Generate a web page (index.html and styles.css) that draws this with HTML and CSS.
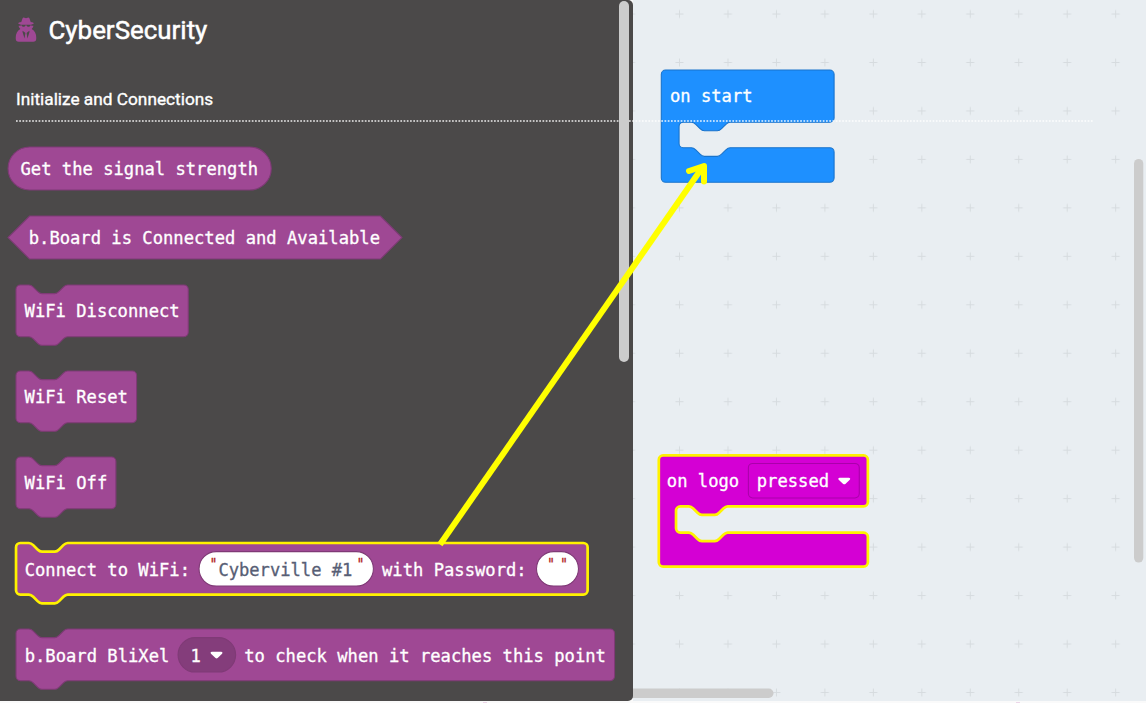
FILE: index.html
```html
<!DOCTYPE html>
<html lang="en">
<head>
<meta charset="utf-8">
<title>CyberSecurity blocks</title>
<link rel="stylesheet" href="styles.css">
</head>
<body>
<div class="editor">
  <aside class="flyout">
    <header class="flyout-head">
      <svg class="agent" viewBox="0 0 22 26" width="22" height="25.4">
        <path d="M6.200 5.200 7.400 1.600Q8 .2 9.400.8 11 1.600 12.600.8 14 .2 14.600 1.600L15.800 5.200Q19 5.800 19 6.500 18.800 7.400 16.700 7.800V8.500L18.700 9Q18.200 11 16.800 12.200 21.500 15 21.500 21V22Q21.500 25.300 18.300 25.300H3.700Q.5 25.300.5 22V21Q.5 15 5.200 12.200 3.800 11 3.300 9L5.300 8.500V7.800Q3.200 7.400 3 6.500 3 5.800 6.200 5.200Z"/>
        <path class="agent-cut" d="M2.500 7.900H19.500V8.600H15.200L14.500 10H12.500L11.800 8.600H10.200L9.500 10H7.500L6.800 8.600H2.500ZM7.500 14 9.600 15.600 10.400 16.500 9.500 22 7.500 15.500ZM14.500 14 12.400 15.600 11.600 16.500 12.500 22 14.500 15.500Z"/>
      </svg>
      <h1>CyberSecurity</h1>
    </header>
    <h2>Initialize and Connections</h2>
    <div class="blocks">
      <svg class="block value" viewBox="0 0 244.6 40" width="263.3" height="43.06">
        <rect width="244.600" height="40" rx="20"/>
        <text x="11.600" y="25.900" textLength="220.800" lengthAdjust="spacingAndGlyphs">Get the signal strength</text>
      </svg>
      <svg class="block value" viewBox="0 0 366 40" width="394" height="43.06">
        <path d="M20 0H346L366 20 346 40H20L0 20Z"/>
        <text x="19.200" y="25.900" textLength="326.400" lengthAdjust="spacingAndGlyphs">b.Board is Connected and Available</text>
      </svg>
      <svg class="block" viewBox="0 0 160 56" width="172.26" height="60.29">
        <path d="M0 4A4 4 0 0 1 4 0H12c2 0 3 1 4 2l4 4c1 1 2 2 4 2h12c2 0 3-1 4-2l4-4c1-1 2-2 4-2H156a4 4 0 0 1 4 4V44a4 4 0 0 1-4 4H48c-2 0-3 1-4 2l-4 4c-1 1-2 2-4 2H24c-2 0-3-1-4-2l-4-4c-1-1-2-2-4-2H4a4 4 0 0 1-4-4Z"/>
        <text x="8" y="29.500" textLength="144" lengthAdjust="spacingAndGlyphs">WiFi Disconnect</text>
      </svg>
      <svg class="block" viewBox="0 0 112 56" width="120.58" height="60.29">
        <path d="M0 4A4 4 0 0 1 4 0H12c2 0 3 1 4 2l4 4c1 1 2 2 4 2h12c2 0 3-1 4-2l4-4c1-1 2-2 4-2H108a4 4 0 0 1 4 4V44a4 4 0 0 1-4 4H48c-2 0-3 1-4 2l-4 4c-1 1-2 2-4 2H24c-2 0-3-1-4-2l-4-4c-1-1-2-2-4-2H4a4 4 0 0 1-4-4Z"/>
        <text x="8" y="29.700" textLength="96" lengthAdjust="spacingAndGlyphs">WiFi Reset</text>
      </svg>
      <svg class="block" viewBox="0 0 92.8 56" width="99.91" height="60.29">
        <path d="M0 4A4 4 0 0 1 4 0H12c2 0 3 1 4 2l4 4c1 1 2 2 4 2h12c2 0 3-1 4-2l4-4c1-1 2-2 4-2H88.800a4 4 0 0 1 4 4V44a4 4 0 0 1-4 4H48c-2 0-3 1-4 2l-4 4c-1 1-2 2-4 2H24c-2 0-3-1-4-2l-4-4c-1-1-2-2-4-2H4a4 4 0 0 1-4-4Z"/>
        <text x="8" y="29.700" textLength="76.800" lengthAdjust="spacingAndGlyphs">WiFi Off</text>
      </svg>
      <svg class="block selected" viewBox="0 0 531 56" width="571.67" height="60.29">
        <path d="M0 4A4 4 0 0 1 4 0H12c2 0 3 1 4 2l4 4c1 1 2 2 4 2h12c2 0 3-1 4-2l4-4c1-1 2-2 4-2H527a4 4 0 0 1 4 4V44a4 4 0 0 1-4 4H48c-2 0-3 1-4 2l-4 4c-1 1-2 2-4 2H24c-2 0-3-1-4-2l-4-4c-1-1-2-2-4-2H4a4 4 0 0 1-4-4Z"/>
        <text x="8" y="30.200" textLength="153.600" lengthAdjust="spacingAndGlyphs">Connect to WiFi:</text>
        <rect class="field" x="170" y="8" width="162" height="32" rx="16"/>
        <text class="quote" x="180" y="25.500" textLength="7" lengthAdjust="spacingAndGlyphs">"</text>
        <text class="string" x="188" y="30.200" textLength="124.500" lengthAdjust="spacingAndGlyphs">Cyberville #1</text>
        <text class="quote" x="316.500" y="25.500" textLength="7" lengthAdjust="spacingAndGlyphs">"</text>
        <text x="340" y="30.200" textLength="134.400" lengthAdjust="spacingAndGlyphs">with Password:</text>
        <rect class="field" x="483.500" y="8" width="39" height="32" rx="16"/>
        <text class="quote" x="493.500" y="25.500" textLength="7" lengthAdjust="spacingAndGlyphs">"</text>
        <text class="quote" x="505.500" y="25.500" textLength="7" lengthAdjust="spacingAndGlyphs">"</text>
      </svg>
      <svg class="block" viewBox="0 0 556 56" width="598.59" height="60.29">
        <path d="M0 4A4 4 0 0 1 4 0H12c2 0 3 1 4 2l4 4c1 1 2 2 4 2h12c2 0 3-1 4-2l4-4c1-1 2-2 4-2H552a4 4 0 0 1 4 4V44a4 4 0 0 1-4 4H48c-2 0-3 1-4 2l-4 4c-1 1-2 2-4 2H24c-2 0-3-1-4-2l-4-4c-1-1-2-2-4-2H4a4 4 0 0 1-4-4Z"/>
        <text x="8" y="30.500" textLength="134.400" lengthAdjust="spacingAndGlyphs">b.Board BliXel</text>
        <rect class="menu" x="150.500" y="8" width="53.500" height="32" rx="16"/>
        <text x="162" y="30.500" textLength="9.600" lengthAdjust="spacingAndGlyphs">1</text>
        <path class="caret" d="M182 21.200H190.500Q192.500 21.500 191.400 23.100L187.300 27Q186.300 27.800 185.300 27L181.100 23.100Q180 21.500 182 21.200Z"/>
        <text x="212" y="30.500" textLength="336" lengthAdjust="spacingAndGlyphs">to check when it reaches this point</text>
      </svg>
    </div>
    <div class="scrollbar flyout-scroll"></div>
  </aside>

  <main class="workspace">
    <svg class="canvas" viewBox="633 0 513 701" width="513" height="701">
      <defs>
        <pattern id="grid" x="655.3" y="-10.2" width="48.46" height="48.46" patternUnits="userSpaceOnUse">
          <path class="cross" d="M20.200 24.200H28.200M24.200 20.200V28.200"/>
        </pattern>
      </defs>
      <rect x="633" width="513" height="701" fill="url(#grid)"/>
      <rect class="bar" x="625" y="688.500" width="148.500" height="9.500" rx="4.700"/>
      <rect class="bar" x="1134" y="159" width="9.300" height="403.500" rx="4.650"/>
      <g class="start" transform="translate(661.3 70) scale(1.0766)">
        <path d="M0 4A4 4 0 0 1 4 0H156.500a4 4 0 0 1 4 4V44.500a4 4 0 0 1-4 4H64c-2 0-3 1-4 2l-4 4c-1 1-2 2-4 2H40c-2 0-3-1-4-2l-4-4c-1-1-2-2-4-2H20.500a4 4 0 0 0-4 4V68.200a4 4 0 0 0 4 4H28c2 0 3 1 4 2l4 4c1 1 2 2 4 2h12c2 0 3-1 4-2l4-4c1-1 2-2 4-2H156.500a4 4 0 0 1 4 4V100.300a4 4 0 0 1-4 4H4a4 4 0 0 1-4-4Z"/>
        <text x="8" y="30" textLength="76.800" lengthAdjust="spacingAndGlyphs">on start</text>
      </g>
      <g class="logo selected" transform="translate(658.8 455.4) scale(1.0766)">
        <path d="M0 4A4 4 0 0 1 4 0H190.200a4 4 0 0 1 4 4V43.300a4 4 0 0 1-4 4H64c-2 0-3 1-4 2l-4 4c-1 1-2 2-4 2H40c-2 0-3-1-4-2l-4-4c-1-1-2-2-4-2H20a4 4 0 0 0-4 4V67.700a4 4 0 0 0 4 4H28c2 0 3 1 4 2l4 4c1 1 2 2 4 2h12c2 0 3-1 4-2l4-4c1-1 2-2 4-2H190.200a4 4 0 0 1 4 4V99.300a4 4 0 0 1-4 4H4a4 4 0 0 1-4-4Z"/>
        <text x="7.500" y="29.400" textLength="67.200" lengthAdjust="spacingAndGlyphs">on logo</text>
        <rect class="menu" x="83.200" y="7.500" width="103" height="32" rx="4"/>
        <text x="91" y="29.400" textLength="67.200" lengthAdjust="spacingAndGlyphs">pressed</text>
        <path class="caret" d="M168 20.700H176.500Q178.500 21 177.400 22.600L173.300 26.500Q172.300 27.300 171.300 26.500L167.100 22.600Q166 21 168 20.700Z"/>
      </g>
    </svg>
  </main>

  <svg class="overlay" viewBox="0 0 1146 703" width="1146" height="703">
    <path class="divider" d="M16 121H618.500"/>
    <path class="divider" d="M629 121H1093"/>
    <path class="arrow" d="M440 544.500 703 166.500"/>
    <path class="arrow head" d="M704 181.500V166L689 171"/>
    <path class="speck" d="M483 702.500h4M1016 702.500h4"/>
  </svg>
</div>
</body>
</html>
```
FILE: styles.css
```css
* { box-sizing: border-box; }

body {
  margin: 0;
  background: #fff;
  font-family: Roboto, sans-serif;
}

.editor {
  position: relative;
  display: flex;
  width: 1146px;
  height: 703px;
  overflow: hidden;
  background: #fafafa;
}

.flyout {
  position: relative;
  z-index: 1;
  flex: none;
  width: 633px;
  height: 701px;
  padding-top: 14px;
  background: #4b4949;
  border-radius: 0 5px 5px 0;
}

.flyout-head {
  display: flex;
  align-items: center;
  gap: 11.5px;
  height: 32px;
  padding-left: 15px;
}

.agent { fill: #9f4894; }
.agent-cut { fill: #4b4949; }

h1 {
  margin: 0;
  color: #fff;
  font-size: 25.9px;
  font-weight: 400;
  line-height: 32px;
  -webkit-text-stroke: 0.5px #fff;
}

h2 {
  margin: 41px 0 0 16px;
  color: #fff;
  font-size: 17.25px;
  font-weight: 400;
  line-height: 24px;
  -webkit-text-stroke: 0.35px #fff;
}

.blocks {
  display: flex;
  flex-direction: column;
  gap: 25.84px;
  margin-top: 36.2px;
  padding-left: 16px;
}

.block {
  flex: none;
  overflow: visible;
  fill: #9f4894;
  stroke: #7f3a76;
}

.block.value { margin-left: -8px; }

text {
  fill: #fff;
  stroke: #fff;
  stroke-width: 0.3px;
  font-family: "DejaVu Sans Mono", monospace;
  font-size: 17px;
}

.selected > path:first-child {
  stroke: #fff200;
  stroke-width: 2.5px;
}

.field { fill: #fff; stroke: #7f3a76; }
.string { fill: #575e75; stroke: #575e75; }
.quote { fill: #b01818; stroke: #b01818; font-size: 14px; }

.menu { fill: #843d7b; stroke: #7f3a76; }
.caret { fill: #fff; stroke: none; }

.scrollbar { background: #ccc; border-radius: 5px; }

.flyout-scroll {
  position: absolute;
  top: 1px;
  right: 4.5px;
  width: 9.5px;
  height: 361px;
}

.workspace {
  flex: 1;
  height: 701px;
  background: #e9eef2;
}

.canvas { display: block; overflow: visible; }
.cross { fill: none; stroke: #d6dbdf; stroke-width: 1px; }
.bar { fill: #ccc; }

.start { fill: #1e90ff; stroke: #1873cc; }
.logo { fill: #d400d4; }
.logo .menu { fill: #d400d4; stroke: #aa00aa; }

.overlay {
  position: absolute;
  z-index: 2;
  top: 0;
  left: 0;
  pointer-events: none;
}

.divider {
  stroke: #fff;
  stroke-opacity: 0.68;
  stroke-width: 1.8px;
  stroke-dasharray: 1.7 1.53;
}

.arrow {
  fill: none;
  stroke: #ff0;
  stroke-width: 6px;
}

.head { stroke-linecap: round; stroke-linejoin: round; }
.speck { stroke: #ecd6e8; }
```
